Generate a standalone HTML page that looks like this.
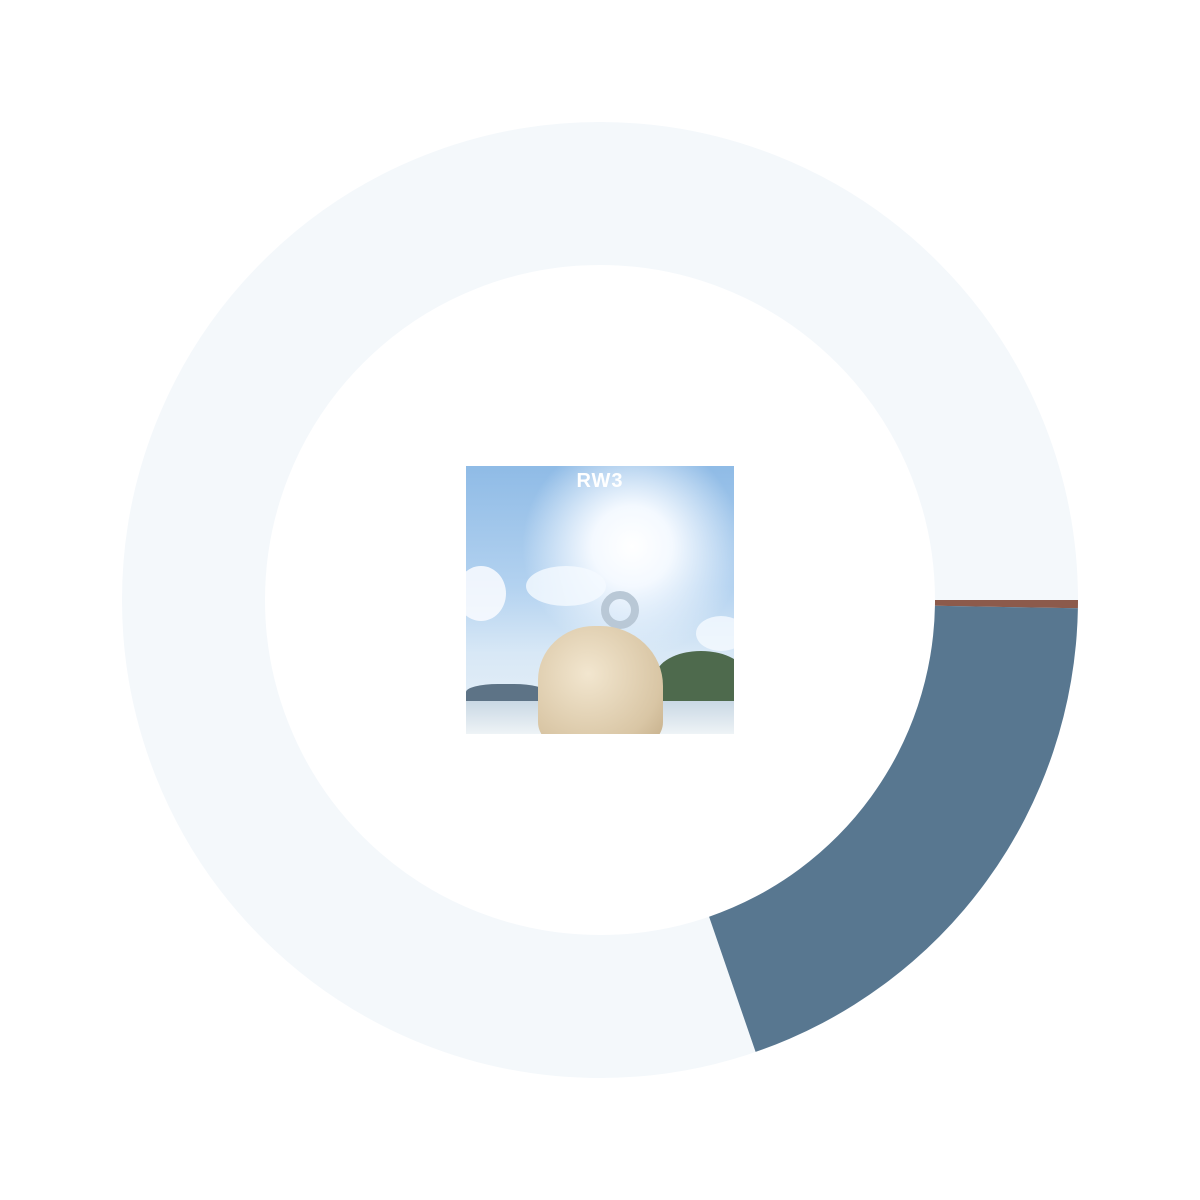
<!DOCTYPE html>
<html><head><meta charset="utf-8"><style>
html,body{margin:0;padding:0;background:#fff;width:1200px;height:1200px;overflow:hidden}
svg{position:absolute;left:0;top:0}
.cover{position:absolute;left:466px;top:466px;width:268px;height:268px;overflow:hidden;
background:
radial-gradient(circle at 62% 30%, #ffffff 0, #f4f9ff 40px, rgba(220,235,250,0) 110px),
linear-gradient(180deg,#8fbbe6 0%,#b3d2f0 45%,#d8e8f6 70%,#e9f1f8 100%);}
.cloud1{position:absolute;left:-10px;top:100px;width:50px;height:55px;border-radius:50%;background:rgba(250,252,255,.85)}
.cloud2{position:absolute;left:60px;top:100px;width:80px;height:40px;border-radius:50%;background:rgba(245,250,255,.8)}
.cloud3{position:absolute;left:230px;top:150px;width:50px;height:35px;border-radius:50%;background:rgba(245,250,255,.8)}
.hill{position:absolute;left:190px;top:185px;width:90px;height:50px;border-radius:50% 50% 0 0;background:#4e6a4d}
.hill2{position:absolute;left:0;top:218px;width:80px;height:20px;background:#5d7386;border-radius:40% 40% 0 0}
.sea{position:absolute;left:0;top:235px;width:268px;height:33px;background:linear-gradient(180deg,#c9d8e4,#eef3f6)}
.dog{position:absolute;left:72px;top:160px;width:125px;height:120px;border-radius:45% 50% 20% 20%;background:radial-gradient(circle at 40% 40%,#f2e6cf,#d9c6a5 70%,#c4ad88)}
.ring{position:absolute;left:135px;top:125px;width:38px;height:38px;border-radius:50%;border:8px solid #b9c8d6;box-sizing:border-box}
.logo{position:absolute;left:0;width:268px;top:4px;text-align:center;color:#fff;font:bold 20px "Liberation Sans",sans-serif;letter-spacing:1px}
</style></head><body>
<svg width="1200" height="1200" viewBox="0 0 1200 1200">
<circle cx="600" cy="600" r="406.5" fill="none" stroke="#f4f8fb" stroke-width="143"/>
<path d="M1078 600 A478 478 0 0 1 1077.9 608.3 L934.95 605.8 A335 335 0 0 0 935 600 Z" fill="#8c5a4b"/>
<path d="M1077.9 608.3 A478 478 0 0 1 755.6 1051.9 L709.1 916.7 A335 335 0 0 0 934.95 605.8 Z" fill="#587790"/>
</svg>
<div class="cover">
<div class="cloud1"></div><div class="cloud2"></div><div class="cloud3"></div>
<div class="hill"></div><div class="hill2"></div><div class="sea"></div>
<div class="ring"></div><div class="dog"></div>
<div class="logo">RW3</div>
</div>
</body></html>
